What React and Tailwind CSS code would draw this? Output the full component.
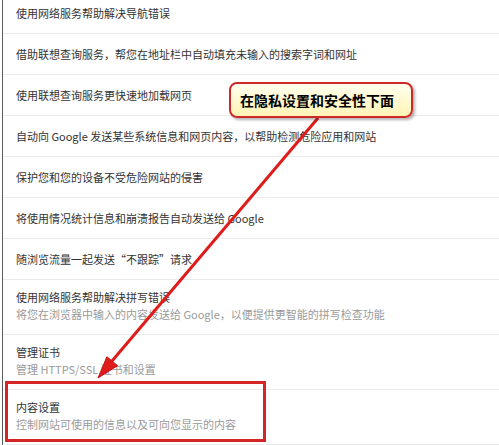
import React from 'react';

const rows = [
  { title: '使用网络服务帮助解决导航错误' },
  { title: '借助联想查询服务，帮您在地址栏中自动填充未输入的搜索字词和网址' },
  { title: '使用联想查询服务更快速地加载网页' },
  { title: '自动向 Google 发送某些系统信息和网页内容，以帮助检测危险应用和网站' },
  { title: '保护您和您的设备不受危险网站的侵害' },
  { title: '将使用情况统计信息和崩溃报告自动发送给 Google' },
  { title: '随浏览流量一起发送“不跟踪”请求' },
  { title: '使用网络服务帮助解决拼写错误', sub: '将您在浏览器中输入的内容发送给 Google，以便提供更智能的拼写检查功能' },
  { title: '管理证书', sub: '管理 HTTPS/SSL 证书和设置' },
  { title: '内容设置', sub: '控制网站可使用的信息以及可向您显示的内容' },
];

const Row = ({ title, sub }) => {
  if (sub) {
    return (
      <div className="h-[55px] border-b border-[#ebebeb] pl-[13px] pt-[9px] leading-[17px]">
        <div className="text-[#333]">{title}</div>
        <div className="text-[#9a9a9a]">{sub}</div>
      </div>
    );
  }
  return (
    <div className="h-[41px] border-b border-[#ebebeb] pl-[13px] flex items-center text-[#333]">
      {title}
    </div>
  );
};

export default function App() {
  return (
    <div
      className="relative w-[499px] h-[445px] overflow-hidden bg-white text-[11px]"
      style={{ fontFamily: '"Noto Sans CJK SC", "Noto Sans", sans-serif' }}
    >
      {/* settings list */}
      <div className="ml-[2px] -mt-[7px] border-l border-[#5a5a5a]">
        {rows.map((r, i) => (
          <Row key={i} {...r} />
        ))}
      </div>

      {/* highlight box */}
      <div className="absolute left-[5px] top-[381px] w-[261px] h-[61px] border-[3px] border-[#d42626]" />

      {/* arrow */}
      <svg className="absolute left-0 top-0" width="499" height="445" viewBox="0 0 499 445">
        <line x1="318" y1="118" x2="112" y2="361" stroke="#e01b1b" strokeWidth="3" />
        <polygon points="98,378 117.5,365.7 106.9,356.7" fill="#e01b1b" stroke="#c01010" strokeWidth="1" />
      </svg>

      {/* callout */}
      <div className="absolute left-[229px] top-[82px] w-[184px] h-[36px] rounded-[8px] border-2 border-[#cc2a2a] bg-gradient-to-b from-[#ffffee] to-[#fff4b5] shadow-[2px_2px_3px_rgba(0,0,0,0.3)] flex items-center pl-[9px]">
        <span className="text-[14px] font-bold text-black tracking-[0px]">在隐私设置和安全性下面</span>
      </div>
    </div>
  );
}
